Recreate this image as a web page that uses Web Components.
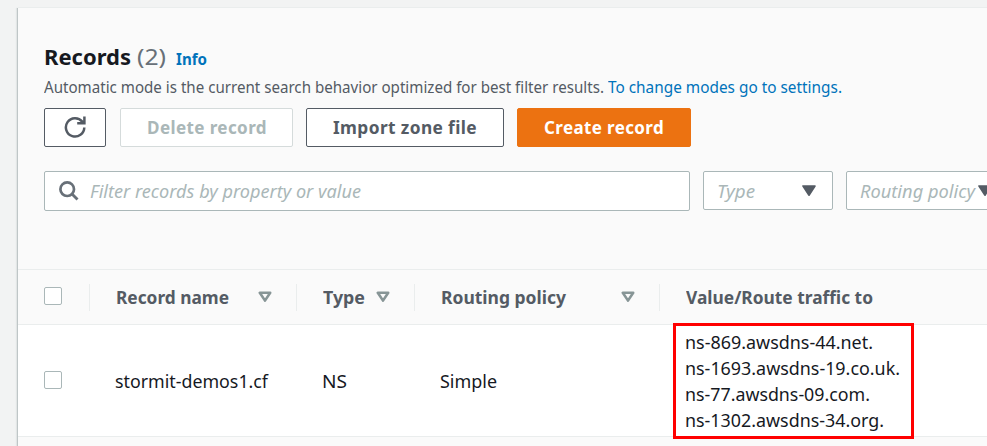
<!DOCTYPE html>
<html lang="en">
<head>
<meta charset="utf-8">
<title>Records</title>
<style>
html,body{margin:0;height:100%;overflow:hidden}
body{background:#f2f3f3;font-family:"Noto Sans","Open Sans",sans-serif;color:#16191f;font-size:18px}
</style>
</head>
<body>
<records-page></records-page>
<script>
const define = (name, html, ready) => {
  const t = document.createElement('template');
  t.innerHTML = html;
  customElements.define(name, class extends HTMLElement {
    constructor() {
      super();
      this.attachShadow({ mode: 'open' }).append(t.content.cloneNode(true));
    }
    connectedCallback() { if (ready) ready(this, this.shadowRoot); }
  });
};

/* One line of text, condensed horizontally to the width given in "w". */
define('fit-text', `<style>
:host{display:block;flex:none;white-space:nowrap;line-height:26px}
span{display:inline-block;transform-origin:0 50%;vertical-align:top}
</style><span><slot></slot></span>`, (el, root) => {
  const w = +el.getAttribute('w');
  const s = root.querySelector('span');
  el.style.width = w + 'px';
  s.style.transform = 'none';
  s.style.transform = 'scaleX(' + w / s.getBoundingClientRect().width + ')';
});

define('ui-button', `<style>
:host{display:flex;box-sizing:border-box;height:39px;border:1px solid #545b64;border-radius:2px;background:#fff;color:#545b64;font-weight:700;align-items:center;justify-content:center;letter-spacing:.4px;padding-bottom:1px}
:host([disabled]){border-color:#d5dbdb;color:#aab7b8}
:host([primary]){border-color:#ec7211;background:#ec7211;color:#fff}
</style><slot></slot>`);

define('icon-refresh', `<style>:host{display:block;width:22px;height:22px}svg{display:block}</style>
<svg width="22" height="22" viewBox="0 0 22 22" fill="none" stroke="#545b64" stroke-width="2.5"><path d="M20.3 11.5A9.2 9.2 0 1 1 18.3 5.6L19.6 6.8M20.4 .6V7.2H13.2"/></svg>`);

define('icon-search', `<style>:host{display:block;width:20px;height:20px}svg{display:block}</style>
<svg width="20" height="20" viewBox="0 0 20 20" fill="none" stroke="#687078" stroke-width="2.7"><circle cx="8.2" cy="8.2" r="6.8"/><path d="M13 13 18.5 18.5" stroke-width="2.9"/></svg>`);

define('icon-caret', `<style>:host{display:block;flex:none;width:14px;height:12px}svg{display:block}</style>
<svg width="14" height="12" viewBox="0 0 14 12"><path d="M1 1H13L7 10.2Z" fill="#545b64" stroke="#545b64" stroke-width="1.6" stroke-linejoin="round"/></svg>`);

define('icon-sort', `<style>:host{display:block;flex:none;width:14px;height:12px}svg{display:block}</style>
<svg width="14" height="12" viewBox="0 0 14 12"><path d="M1.8 1.8H12.2L7 9.6Z" fill="none" stroke="#879596" stroke-width="2.6" stroke-linejoin="round"/></svg>`);

define('ui-checkbox', `<style>:host{display:block;flex:none;box-sizing:border-box;width:18px;height:18px;border:1px solid #aab7b8;border-radius:2px;background:#fff}</style>`);

define('ui-field', `<style>
:host{display:flex;flex:none;box-sizing:border-box;height:39px;border:1px solid #aab7b8;border-radius:2px;background:#fff;color:#aab7b8;font-style:italic;align-items:center}
</style><slot></slot>`);

define('records-header', `<style>
:host{display:block;box-sizing:border-box;height:261px;padding:33px 0 0 26px}
.title{display:flex;font-size:22px;align-items:baseline;height:34px}
.title fit-text{line-height:30px}
.count{color:#687078;margin-left:6px}
.link{color:#0073bb}
.title .info{font-size:16px;font-weight:700;margin-left:10px}
.desc{display:flex;font-size:16px;color:#545b64;height:33px;gap:4px}
.desc fit-text{line-height:24px}
.buttons{display:flex}
.filters{display:flex;margin-top:24px}
</style>
<div class="title"><fit-text w="87" style="font-weight:700">Records</fit-text><fit-text class="count" w="29">(2)</fit-text><fit-text class="link info" w="31">Info</fit-text></div>
<div class="desc"><fit-text w="560">Automatic mode is the current search behavior optimized for best filter results.</fit-text><fit-text class="link" w="234">To change modes go to settings.</fit-text></div>
<div class="buttons">
<ui-button style="width:62px"><icon-refresh></icon-refresh></ui-button>
<ui-button disabled style="width:173px;margin-left:14px"><fit-text w="120">Delete record</fit-text></ui-button>
<ui-button style="width:198px;margin-left:13px"><fit-text w="144">Import zone file</fit-text></ui-button>
<ui-button primary style="width:174px;margin-left:13px"><fit-text w="120">Create record</fit-text></ui-button>
</div>
<div class="filters">
<ui-field style="width:646px;height:40px;padding-left:14px;gap:11px"><icon-search></icon-search><fit-text w="271">Filter records by property or value</fit-text></ui-field>
<ui-field style="width:130px;margin-left:13px;padding:0 16px 0 13px;justify-content:space-between"><fit-text w="38">Type</fit-text><icon-caret></icon-caret></ui-field>
<ui-field style="width:180px;margin-left:13px;padding-left:13px;gap:3px"><fit-text w="115">Routing policy</fit-text><icon-caret></icon-caret></ui-field>
</div>`);

define('table-row', `<style>
:host{display:grid;box-sizing:border-box;grid-template-columns:72px 207px 118px 245px 1fr;align-items:center;border-top:1px solid #eaeded}
</style><slot></slot>`);

define('table-cell', `<style>
:host{display:flex;box-sizing:border-box;padding:1px 24px 0 25px;align-items:center;justify-content:space-between}
:host([head]){height:27px;border-right:1px solid #eaeded;color:#545b64;font-weight:700;padding:0 24px 0 26px}
:host([head]:last-of-type){border-right:0}
:host([check]){padding:0 0 2px 26px}
:host([stack]){flex-direction:column;align-items:flex-start}
</style><slot></slot>`);

define('records-table', `<style>
:host{display:block;position:relative}
.head{height:55px}
.body{height:112px;background:#fff}
.foot{height:20px;border-top:1px solid #eaeded}
.mark{position:absolute;left:655px;top:54px;width:241px;height:116px;box-sizing:border-box;border:3px solid #f00}
</style>
<table-row class="head">
<table-cell head check style="padding:0 0 2px 26px"><ui-checkbox></ui-checkbox></table-cell>
<table-cell head><fit-text w="113">Record name</fit-text><icon-sort></icon-sort></table-cell>
<table-cell head><fit-text w="42">Type</fit-text><icon-sort></icon-sort></table-cell>
<table-cell head><fit-text w="125">Routing policy</fit-text><icon-sort></icon-sort></table-cell>
<table-cell head style="border-right:0"><fit-text w="187">Value/Route traffic to</fit-text></table-cell>
</table-row>
<table-row class="body">
<table-cell check><ui-checkbox></ui-checkbox></table-cell>
<table-cell><fit-text w="153">stormit-demos1.cf</fit-text></table-cell>
<table-cell><fit-text w="25">NS</fit-text></table-cell>
<table-cell><fit-text w="57">Simple</fit-text></table-cell>
<table-cell stack><fit-text w="188">ns-869.awsdns-44.net.</fit-text><fit-text w="215">ns-1693.awsdns-19.co.uk.</fit-text><fit-text w="185">ns-77.awsdns-09.com.</fit-text><fit-text w="199">ns-1302.awsdns-34.org.</fit-text></table-cell>
</table-row>
<div class="foot"></div>
<div class="mark"></div>`);

define('records-page', `<style>
:host{display:block;box-sizing:border-box;height:446px;padding:8px 0 0 18px;overflow:hidden}
main{height:438px;background:#fafafa;box-shadow:0 -1px 0 #eaeded,-1px 0 0 #bfc6c7,-2px 0 1px #e2e5e5}
</style><main><records-header></records-header><records-table></records-table></main>`);
</script>
</body>
</html>
